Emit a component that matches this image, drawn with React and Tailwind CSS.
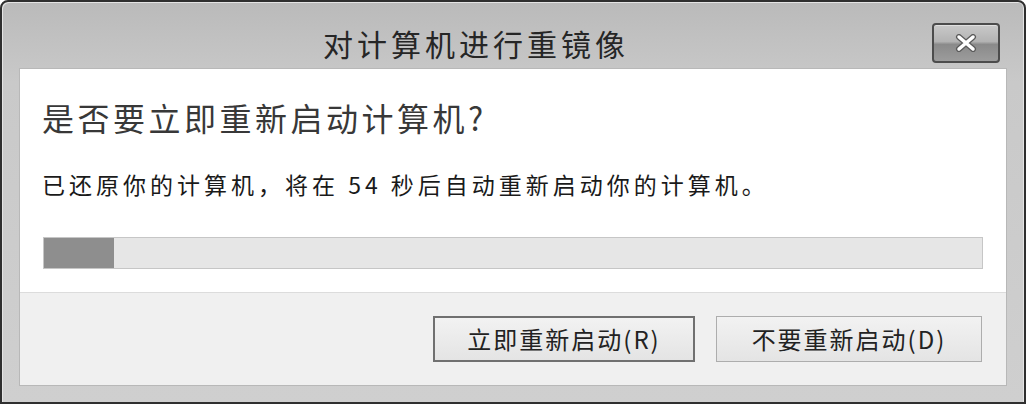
const cjk = "font-['Microsoft_YaHei','Noto_Sans_CJK_SC',sans-serif]";

const CloseButton = () => {
  return (
    <div className="flex h-[40px] w-[68px] items-center justify-center rounded-[4px] border-2 border-[#4c4c4c] bg-[linear-gradient(to_bottom,#c9c9c9_0%,#b3b3b3_46%,#8a8a8a_54%,#9c9c9c_100%)] shadow-[inset_0_1px_0_#e0e0e0]">
      <svg width="22" height="18" viewBox="0 0 22 18">
        <path d="M4 3 L18 15 M18 3 L4 15" stroke="#5a5a5a" strokeWidth="6" strokeLinecap="round" />
        <path d="M4 3 L18 15 M18 3 L4 15" stroke="#ffffff" strokeWidth="3.5" strokeLinecap="round" />
      </svg>
    </div>
  );
};

const App = () => {
  return (
    <div className={`h-[404px] w-[1026px] bg-white ${cjk}`}>
      <div className="flex h-full flex-col rounded-t-[8px] border-2 border-[#2f2f2f] bg-[linear-gradient(to_bottom,#bababa,#c9c9c9_20%,#cfcfcf)] px-[18px] pb-[17px] shadow-[inset_1px_1px_0_#e4e4e4,inset_-1px_0_0_#e4e4e4]">
        {/* title bar */}
        <div className="flex h-[67px] items-end pb-[6px]">
          <div className="flex-1 text-center text-[30px] leading-[40px] tracking-[4px] text-[#262626]">
            对计算机进行重镜像
          </div>
          <div className="mr-[6px]">
            <CloseButton />
          </div>
        </div>

        {/* content */}
        <div className="flex flex-1 flex-col bg-white shadow-[0_0_0_1px_#b8b8b8]">
          <div className="px-[22px] pt-[30px] pb-[23px]">
            <h1 className="text-[32px] leading-[36px] tracking-[3.5px] text-[#383838]">
              是否要立即重新启动计算机?
            </h1>
            <p className="mt-[35px] text-[23px] leading-[28px] tracking-[4px] text-[#1a1a1a]">
              已还原你的计算机，将在 54 秒后自动重新启动你的计算机。
            </p>
            <div className="mt-[39px] ml-px h-[32px] w-[940px] border border-[#c6c6c6] bg-[#e6e6e6]">
              <div className="h-full w-[70px] bg-[#8e8e8e]"></div>
            </div>
          </div>

          <div className="flex flex-1 items-center justify-end gap-[21px] border-t border-[#dcdcdc] bg-[#f0f0f0] pr-[24px]">
            <button className="h-[46px] w-[262px] border-2 border-[#707070] bg-[linear-gradient(to_bottom,#f2f2f2,#e4e4e4)] text-[24px] tracking-[2px] text-[#222]">
              立即重新启动(R)
            </button>
            <button className="h-[46px] w-[266px] border border-[#adadad] bg-[linear-gradient(to_bottom,#f2f2f2,#e4e4e4)] text-[24px] tracking-[2px] text-[#222]">
              不要重新启动(D)
            </button>
          </div>
        </div>
      </div>
    </div>
  );
};

export default App;
